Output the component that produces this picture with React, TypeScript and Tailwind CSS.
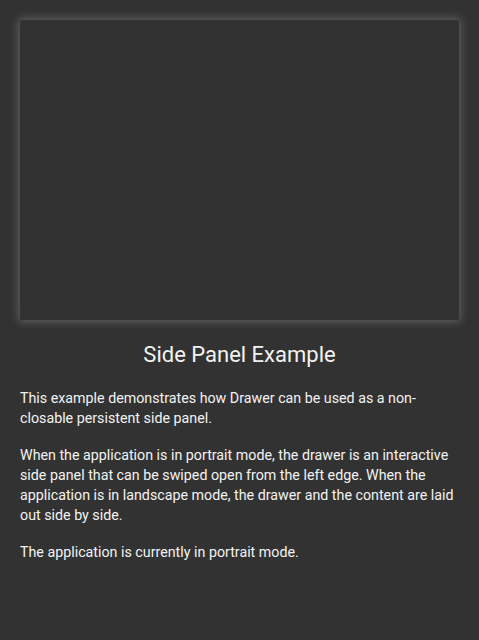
export default function App() {
  return (
    <div
      className="w-[479px] h-[640px] bg-[#323232] text-[#f2f2f2] px-5 pt-5"
      style={{ fontFamily: "Roboto, 'Liberation Sans', sans-serif" }}
    >
      <div className="h-[300px] rounded-[2px] bg-[#323232] shadow-[0_0_9px_2px_rgba(125,125,125,0.6)]" />
      <h1 className="mt-[19px] text-center text-[22px] leading-[32px]">
        Side Panel Example
      </h1>
      <div className="mt-[17px] text-[14.25px] leading-[20px] space-y-[17px]">
        <p>
          This example demonstrates how Drawer can be used as a non-closable
          persistent side panel.
        </p>
        <p>
          When the application is in portrait mode, the drawer is an
          interactive side panel that can be swiped open from the left edge.
          When the application is in landscape mode, the drawer and the content
          are laid out side by side.
        </p>
        <p>The application is currently in portrait mode.</p>
      </div>
    </div>
  );
}
